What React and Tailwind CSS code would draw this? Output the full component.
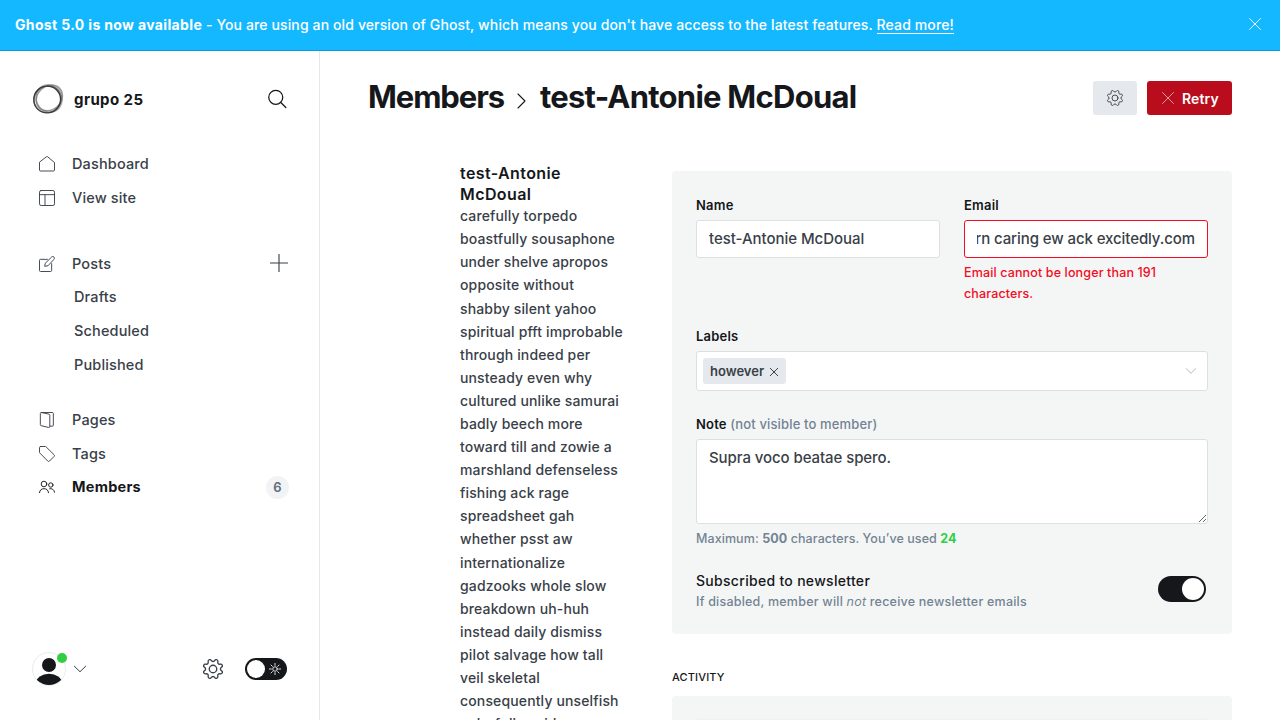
import React from "react";

const GEAR =
  "M10.546 2.438a1.957 1.957 0 002.908 0L14.4 1.4a1.959 1.959 0 013.41 1.413l-.071 1.4a1.958 1.958 0 002.051 2.054l1.4-.071a1.959 1.959 0 011.41 3.41l-1.042.94a1.96 1.96 0 000 2.909l1.042.94a1.959 1.959 0 01-1.413 3.41l-1.4-.071a1.958 1.958 0 00-2.056 2.056l.071 1.4A1.959 1.959 0 0114.4 22.6l-.941-1.041a1.959 1.959 0 00-2.908 0L9.606 22.6A1.959 1.959 0 016.2 21.192l.072-1.4a1.958 1.958 0 00-2.056-2.056l-1.4.071A1.958 1.958 0 011.4 14.4l1.041-.94a1.96 1.96 0 000-2.909L1.4 9.606A1.958 1.958 0 012.809 6.2l1.4.071a1.958 1.958 0 002.058-2.06L6.2 2.81A1.959 1.959 0 019.606 1.4z";

function Icon({ className, width = 1.5, box = "0 0 24 24", children }) {
  return (
    <svg viewBox={box} className={className} fill="none" stroke="currentColor" strokeWidth={width} strokeLinecap="round" strokeLinejoin="round">
      {children}
    </svg>
  );
}

function Gear({ className, width }) {
  return (
    <Icon className={className} width={width}>
      <path d={GEAR} />
      <circle cx="12" cy="12" r="4.5" />
    </Icon>
  );
}

function Cross({ className, width }) {
  return (
    <Icon className={className} width={width}>
      <path d="M1 1l22 22M23 1L1 23" />
    </Icon>
  );
}

const icons = {
  home: <path d="M.75 9.8v11.3c0 .8.6 1.4 1.4 1.4h19.700c.8 0 1.400-.6 1.400-1.400V9.800L12.900 1.100a1.400 1.400 0 00-1.800 0z" />,
  site: (
    <>
      <rect x=".75" y=".75" width="22.500" height="22.500" rx="2.500" />
      <path d="M.75 7h22.500M9 7v16.250" />
    </>
  ),
  posts: (
    <>
      <path d="M12.600 5H2.250A1.500 1.500 0 00.75 6.500v15.250a1.500 1.500 0 001.500 1.500H17.500a1.500 1.500 0 001.500-1.500V11.500" />
      <path d="M13 14.700l-4.500.8.800-4.500L18.900 1.600a2.300 2.300 0 013.500 0 2.300 2.300 0 010 3.500z" />
    </>
  ),
  pages: (
    <>
      <path d="M3.500.75h16.500a1.500 1.500 0 011.500 1.500v17.500a1.500 1.500 0 01-1.500 1.500h-3.500" />
      <path d="M3.500.75l11.500 2.500a1.500 1.500 0 011.200 1.500v17a1.500 1.500 0 01-1.900 1.400L3.200 20.500A1.500 1.500 0 012 19V2.250A1.500 1.500 0 013.500.75z" />
    </>
  ),
  tags: <path d="M2.250.75h7a2 2 0 011.400.6l12 11.800a1.800 1.800 0 010 2.500l-7 7a1.800 1.800 0 01-2.500 0l-11.800-12a2 2 0 01-.6-1.400v-7a1.500 1.500 0 011.500-1.500z" />,
  members: (
    <>
      <circle cx="7.500" cy="7.500" r="4.200" />
      <path d="M.75 20.500a6.800 6.800 0 0113.500 0" />
      <circle cx="17.700" cy="9" r="3.300" />
      <path d="M16 14.600a5.500 5.500 0 017.250 5.200" />
    </>
  ),
};

function NavItem({ icon, label, active, className = "", children }) {
  return (
    <div className={"flex items-center pl-[39px] text-[14.500px] " + (active ? "pr-[30px] " : "pr-[31px] ") + className}>
      <Icon className={"mr-[17px] h-4 w-4 shrink-0 " + (active ? "text-[#15171a]" : "text-[#394047]")} width={1.4}>
        {icons[icon]}
      </Icon>
      <span className={"flex-1 " + (active ? "font-bold tracking-[0.25px] text-[#15171a]" : "")}>{label}</span>
      {children}
    </div>
  );
}

function Logo() {
  return (
    <svg viewBox="0 0 32 32" className="h-8 w-8" fill="none">
      <ellipse cx="17.300" cy="15" rx="11.800" ry="14" stroke="#555" strokeOpacity=".6" strokeWidth="1.600" transform="rotate(48 17.300 15)" />
      <ellipse cx="17" cy="15.500" rx="12.700" ry="13.900" stroke="#777" strokeOpacity=".6" strokeWidth="1.500" transform="rotate(-30 17 15.500)" />
      <circle cx="15.200" cy="16.500" r="13.400" stroke="#222" strokeOpacity=".9" strokeWidth="1.400" />
      <ellipse cx="15.500" cy="16.300" rx="14" ry="12.800" stroke="#444" strokeOpacity=".7" strokeWidth="1" transform="rotate(-40 15.500 16.300)" />
    </svg>
  );
}

function Sidebar() {
  return (
    <nav className="flex w-80 shrink-0 flex-col border-r border-[#e5e8ea]">
      <div className="mt-8 flex h-8 items-center pl-8 pr-8">
        <Logo />
        <span className="ml-2.5 mt-0.5 flex-1 text-[15px] font-bold tracking-[0.4px] text-[#15171a]">grupo 25</span>
        <Icon className="h-5 w-5 text-[#15171a]" width={1.5}>
          <circle cx="10.500" cy="10" r="8.400" />
          <path d="M16.600 16.200l6 6" />
        </Icon>
      </div>
      <div className="mt-8 flex flex-col">
        <NavItem icon="home" label="Dashboard" className="h-[34px]" />
        <NavItem icon="site" label="View site" className="h-[34px]" />
        <NavItem icon="posts" label="Posts" className="mt-8 h-[34px]">
          <Icon className="mb-0.5 h-[18px] w-[18px]" width={1.5}>
            <path d="M12 .5v23M.5 12h23" />
          </Icon>
        </NavItem>
        <div className="flex flex-col pl-[74px] text-[14.500px]">
          <span className="flex h-8 items-center">Drafts</span>
          <span className="mt-px flex h-[34px] items-center">Scheduled</span>
          <span className="flex h-[34px] items-center">Published</span>
        </div>
        <NavItem icon="pages" label="Pages" className="mt-[21px] h-[34px]" />
        <NavItem icon="tags" label="Tags" className="h-[34px]" />
        <NavItem icon="members" label="Members" active className="h-8">
          <span className="mt-px flex h-[23px] w-[23px] items-center justify-center rounded-full bg-[#f1f3f4] text-[13px] font-semibold text-[#626d79]">6</span>
        </NavItem>
      </div>
      <div className="mb-[34px] mt-auto flex h-[34px] items-center pl-8 pr-8">
        <div className="relative h-[34px] w-[34px]">
          <svg viewBox="0 0 34 34" className="h-[34px] w-[34px]">
            <clipPath id="face">
              <circle cx="17" cy="16.500" r="16.500" />
            </clipPath>
            <circle cx="17" cy="17" r="16.500" fill="#fff" stroke="#e3e6e8" strokeWidth=".8" />
            <g clipPath="url(#face)" fill="#15171a">
              <circle cx="17" cy="13" r="7" />
              <ellipse cx="17" cy="31" rx="13" ry="9.200" />
            </g>
          </svg>
          <span className="absolute right-[-1px] top-px h-2.5 w-2.5 rounded-full bg-[#30cf43]" />
        </div>
        <Icon className="ml-2 h-3 w-3" width={2}>
          <path d="M.75 6.500L12 17.500 23.250 6.500" />
        </Icon>
        <div className="flex-1" />
        <Gear className="mr-[22px] h-5 w-5" width={1.6} />
        <div className="flex h-[22px] w-[42px] items-center rounded-full bg-[#15171a] pl-0.5 text-white">
          <span className="h-[18px] w-[18px] rounded-full bg-white" />
          <Icon className="ml-1 h-3 w-3" width={1.700}>
            <circle cx="12" cy="12" r="4.500" />
            <path d="M12 .75v4M12 19.250v4M.75 12h4M19.250 12h4M4 4l2.800 2.800M17.200 17.200L20 20M20 4l-2.800 2.800M6.800 17.200L4 20" />
          </Icon>
        </div>
      </div>
    </nav>
  );
}

const noteLines = [
  "carefully torpedo", "boastfully sousaphone", "under shelve apropos", "opposite without",
  "shabby silent yahoo", "spiritual pfft improbable", "through indeed per", "unsteady even why",
  "cultured unlike samurai", "badly beech more", "toward till and zowie a", "marshland defenseless",
  "fishing ack rage", "spreadsheet gah", "whether psst aw", "internationalize",
  "gadzooks whole slow", "breakdown uh-huh", "instead daily dismiss", "pilot salvage how tall",
  "veil skeletal", "consequently unselfish", "colorfully aside",
];

function Label({ children }) {
  return <label className="block h-[19px] text-[13px] font-semibold leading-[19px] tracking-[0.2px] text-[#15171a]">{children}</label>;
}

function MemberForm() {
  return (
    <section className="h-[463px] rounded bg-[#f4f6f6] px-6 pt-[25px]">
      <div className="flex h-[131px] gap-6">
        <div className="w-[244px]">
          <Label>Name</Label>
          <div className="mt-[5px] flex h-[38px] items-center rounded-[3px] border border-[#dddfe1] bg-white px-3 text-[15px] tracking-[-0.040px]">test-Antonie McDoual</div>
        </div>
        <div className="w-[244px]">
          <Label>Email</Label>
          <div className="mt-[5px] flex h-[38px] items-center rounded-[3px] border border-[#f50b23] bg-white px-3 text-[15px] tracking-[-0.090px]">
            <div className="flex w-full justify-end overflow-hidden whitespace-nowrap">ern caring ew ack excitedly.com</div>
          </div>
          <p className="mt-1 text-[12.500px] leading-[21px] text-[#f50b23]">Email cannot be longer than 191 characters.</p>
        </div>
      </div>
      <Label>Labels</Label>
      <div className="mt-[5px] flex h-10 items-center justify-between rounded-[3px] border border-[#dddfe1] bg-white pl-1.5 pr-[11px]">
        <span className="flex h-[26px] items-center rounded-[3px] bg-[#e5e9ed] pl-[7px] pr-2 text-[13px] font-semibold tracking-normal">
          <span className="mt-0.5">however</span>
          <Cross className="ml-1.5 mt-0.5 h-2 w-2" width={3} />
        </span>
        <Icon className="h-2.5 w-2.5 text-[#abb4be]" width={2.200}>
          <path d="M.75 6.500L12 17.500 23.250 6.500" />
        </Icon>
      </div>
      <div className="mt-6">
        <Label>
          Note <span className="font-[450] tracking-[0.150px] text-[#738393]">(not visible to member)</span>
        </Label>
      </div>
      <textarea
        readOnly
        className="mt-[5px] block h-[85px] w-full rounded-[3px] border border-[#dddfe1] bg-white px-3 py-1.5 text-[15px] leading-[23px] tracking-[-0.080px] outline-none"
        value="Supra voco beatae spero."
      />
      <p className="mt-1 text-[12.500px] leading-[21px] tracking-[0.080px] text-[#738393]">
        Maximum: <b className="font-bold">500</b> characters. You’ve used <b className="font-bold text-[#30cf43]">24</b>
      </p>
      <div className="mt-[21px] flex items-center justify-between pr-0.5">
        <div>
          <h4 className="text-[14px] font-medium leading-[21px] tracking-[0.3px] text-[#15171a]">Subscribed to newsletter</h4>
          <p className="text-[12.500px] leading-[21px] tracking-[0.220px] text-[#738393]">
            If disabled, member will <em>not</em> receive newsletter emails
          </p>
        </div>
        <span className="mt-[-5px] flex h-[26px] w-12 items-center justify-end rounded-full bg-[#15171a] pr-0.5">
          <span className="h-[22px] w-[22px] rounded-full bg-white" />
        </span>
      </div>
    </section>
  );
}

export default function App() {
  return (
    <div className="flex h-[720px] w-[1280px] flex-col overflow-hidden bg-white font-['Inter',sans-serif] font-[450] tracking-[0.140px] text-[#394047]">
      <header className="flex h-[51px] shrink-0 items-center justify-between border-b border-[#0a9ae0] bg-[#14b8ff] pl-[15px] pr-[19px] text-white">
        <p className="mb-0.5 text-[14px] tracking-[0.120px]">
          <b className="font-bold tracking-[0.35px]">Ghost 5.0 is now available</b> - You are using an old version of Ghost, which means you don't have access to the latest features.{" "}
          <span className="border-b border-white font-medium">Read more!</span>
        </p>
        <Cross className="mb-0.5 h-3 w-3" width={1.800} />
      </header>
      <div className="flex min-h-0 flex-1">
        <Sidebar />
        <main className="flex min-w-0 flex-1 flex-col overflow-hidden pl-12 pr-12">
          <div className="mt-[30px] flex h-[34px] shrink-0 items-center">
            <h2 className="mb-0.5 flex flex-1 items-center text-[31px] font-bold leading-[34px] text-[#15171a]">
              <span className="tracking-[-1.100px]">Members</span>
              <Icon className="ml-2.5 mr-2.5 mt-[7px] h-4 w-4" width={1.600}>
                <path d="M6 1.500L16.500 12 6 22.500" />
              </Icon>
              <span className="tracking-[-0.750px]">test-Antonie McDoual</span>
            </h2>
            <span className="flex h-[34px] w-11 items-center justify-center rounded-[3px] bg-[#e5e9ed]">
              <Gear className="h-4 w-4" width={1.400} />
            </span>
            <span className="ml-2.5 flex h-[34px] w-[85px] items-center rounded-[3px] bg-[#b90c1c] pl-[15px] text-[14px] font-semibold text-white">
              <Cross className="mb-px mr-2 h-3 w-3" width={1.200} />
              <span className="mt-px">Retry</span>
            </span>
          </div>
          <div className="mt-12 flex min-h-0 flex-1">
            <aside className="ml-[92px] w-[212px] shrink-0 whitespace-nowrap">
              <h3 className="text-[16px] font-semibold leading-[21px] tracking-[0.400px] text-[#15171a]">
                test-Antonie
                <br />
                McDoual
              </h3>
              <p className="mt-[-0.850px] text-[14px] leading-[23.1px]">
                {noteLines.map((line) => (
                  <span key={line} className="block">{line}</span>
                ))}
              </p>
            </aside>
            <div className="w-[560px] pt-2">
              <MemberForm />
              <h4 className="mt-[35px] text-[11px] font-medium leading-4 text-[#15171a]">ACTIVITY</h4>
              <section className="mt-[11px] h-32 rounded bg-[#f4f6f6] px-6 pt-6">
                <div className="h-24 bg-white shadow-sm" />
              </section>
            </div>
          </div>
        </main>
      </div>
    </div>
  );
}
